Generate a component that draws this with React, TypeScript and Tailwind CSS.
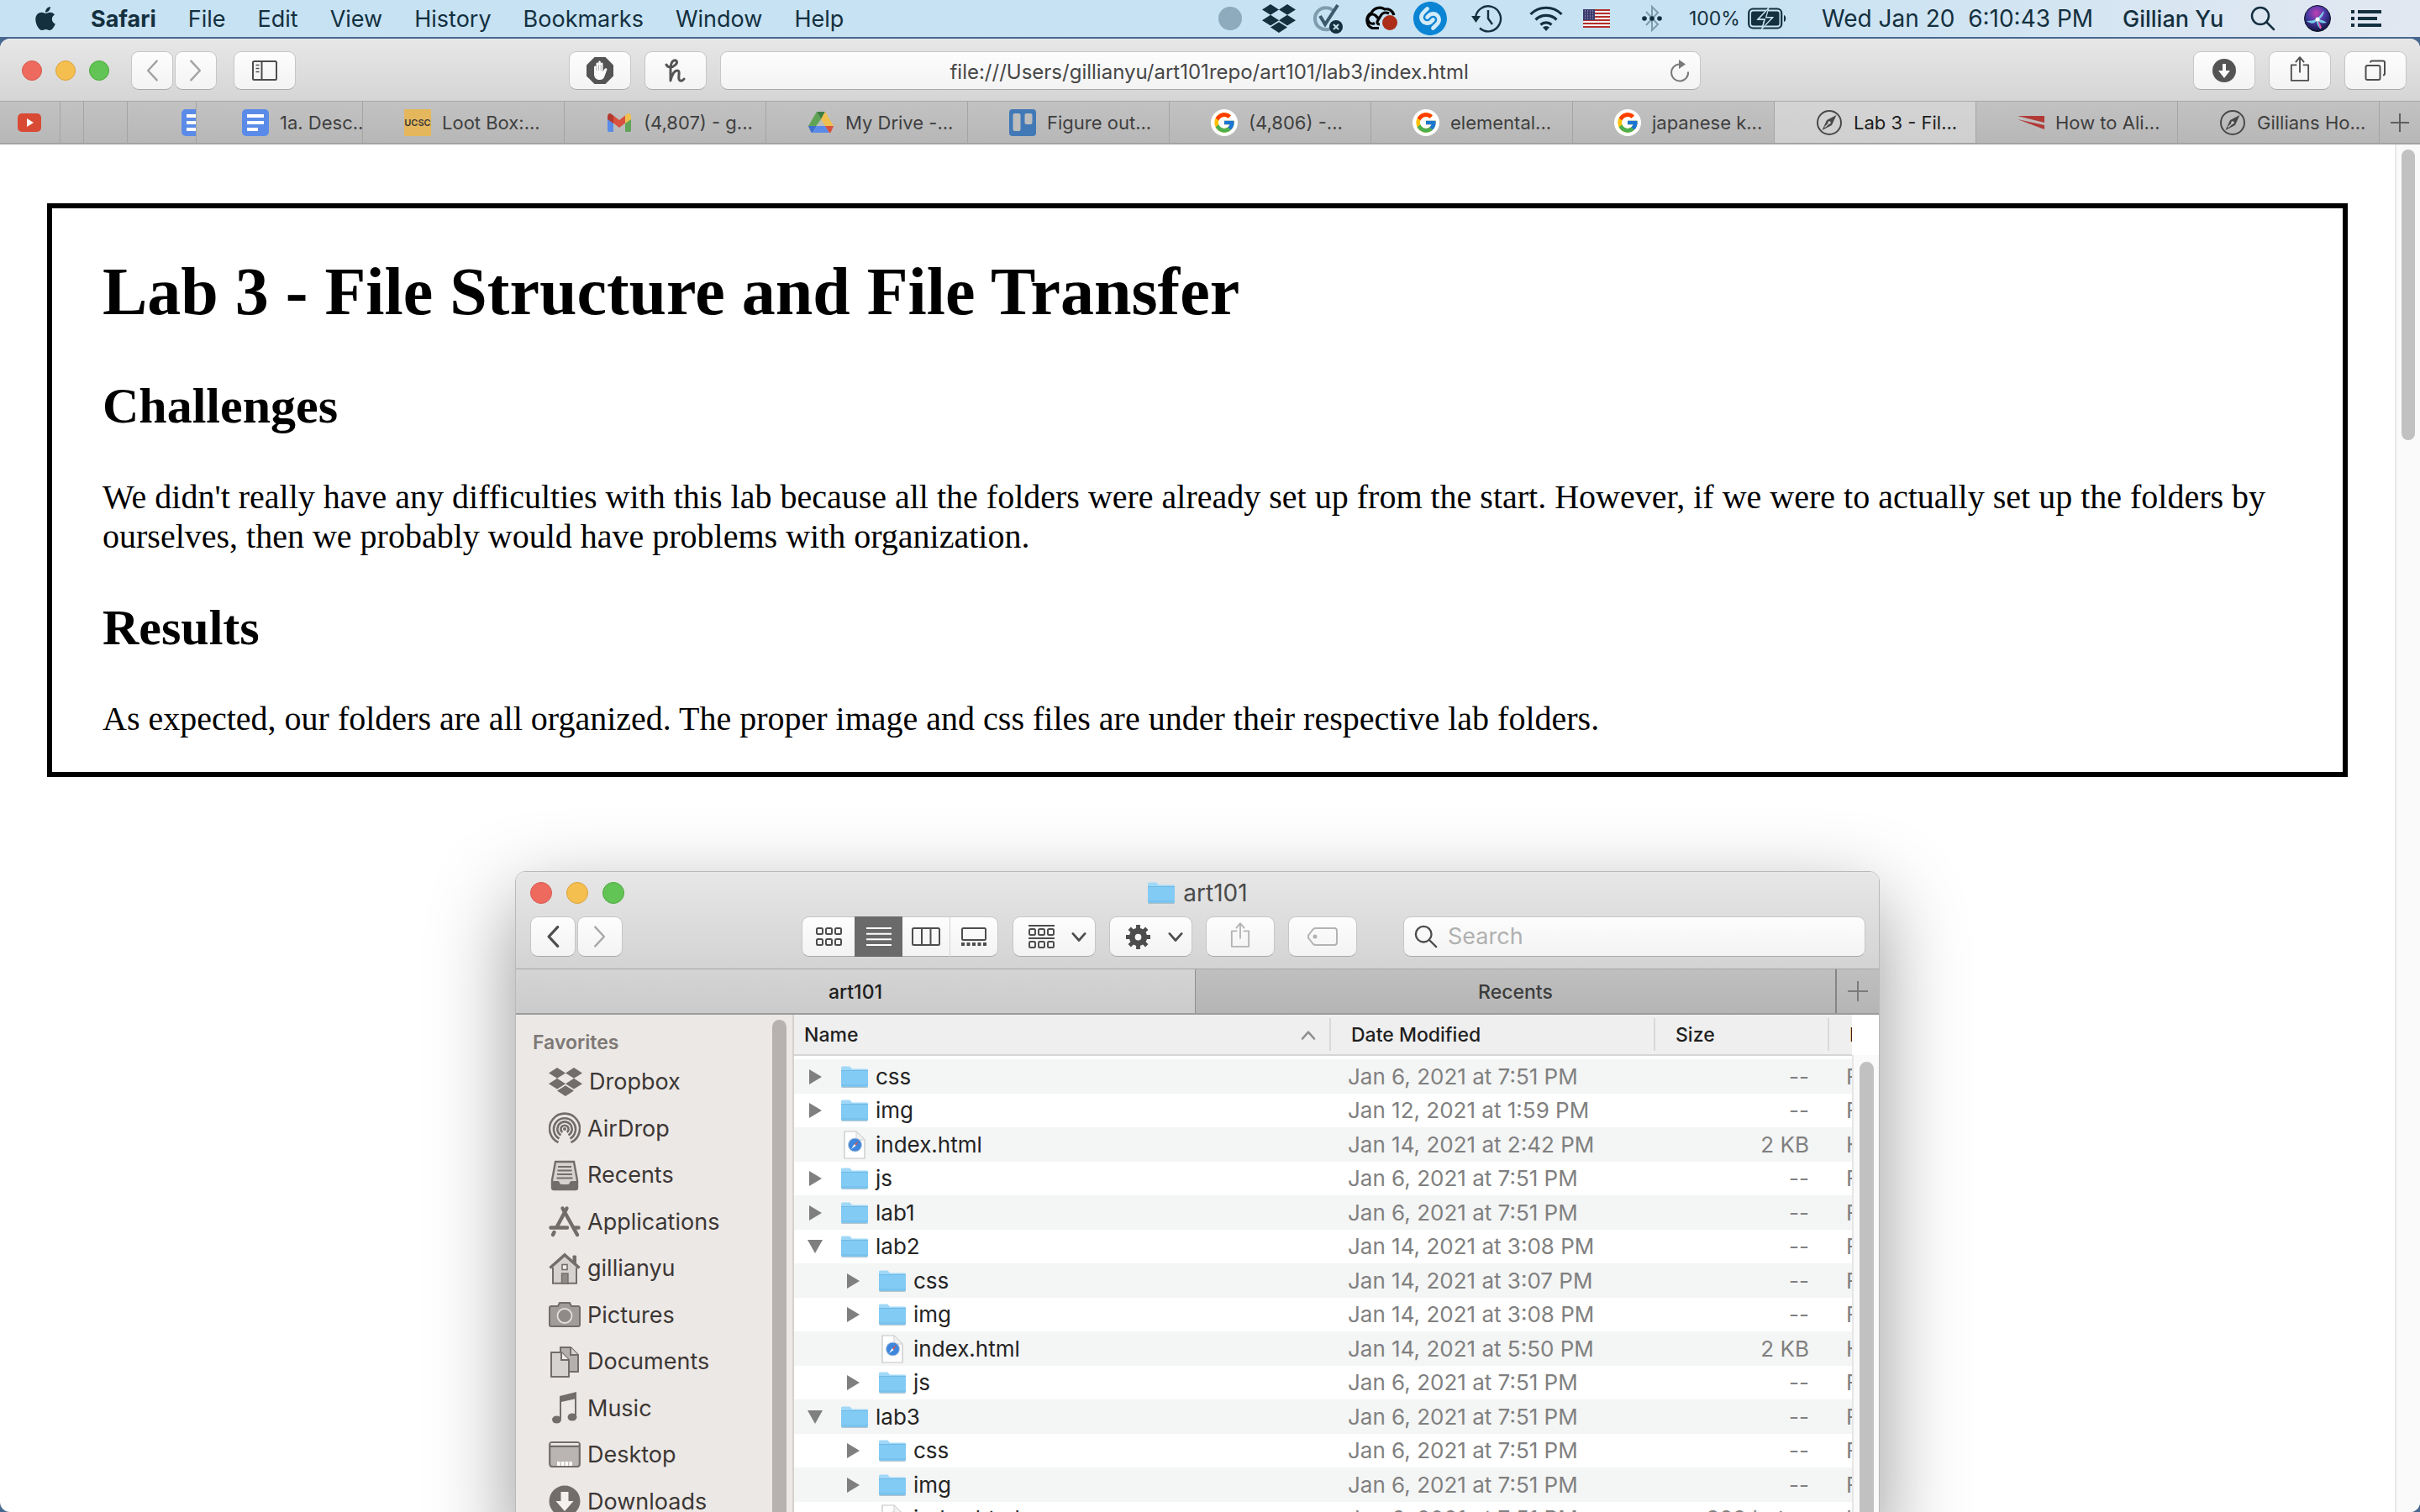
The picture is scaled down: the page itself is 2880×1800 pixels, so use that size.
import React from "react";
import { FaApple, FaDropbox } from "react-icons/fa";
import { FcGoogle } from "react-icons/fc";
import { SiShazam } from "react-icons/si";

type P = { className?: string };

/* ---------- shared pieces ---------- */

const btn =
  "flex shrink-0 items-center justify-center rounded-[9px] border border-[#c6c6c6] border-b-[#a9a9a9] bg-linear-to-b from-[#fdfdfd] to-[#f3f3f3] text-[#4d4d4d]";

function Chevron({ dir, className = "", w = 3 }: { dir: "left" | "right" | "down" | "up"; className?: string; w?: number }) {
  const d = { left: "M16 2 3 16l13 14", right: "M2 2l13 14L2 30", down: "M2 4l8 9 8-9", up: "M2 12l8-9 8 9" }[dir];
  const tall = dir === "left" || dir === "right";
  return (
    <svg viewBox={tall ? "0 0 18 32" : "0 0 20 16"} className={className} fill="none" stroke="currentColor" strokeWidth={w} strokeLinecap="round" strokeLinejoin="round">
      <path d={d} />
    </svg>
  );
}

function ShareIcon({ className = "", w = 2 }: { className?: string; w?: number }) {
  return (
    <svg viewBox="0 0 26 34" className={className} fill="none" stroke="currentColor" strokeWidth={w}>
      <path d="M9 12H2v20h22V12h-7M13 22V2M7.500 8.500 13 2l5.500 6.500" strokeLinejoin="round" />
    </svg>
  );
}

function SearchIcon({ className = "" }: P) {
  return (
    <svg viewBox="0 0 30 30" className={className} fill="none" stroke="currentColor" strokeWidth="2.500" strokeLinecap="round">
      <circle cx="12" cy="12" r="10" />
      <path d="m19 19 9 9" />
    </svg>
  );
}

/* ---------- menu bar icons ---------- */

const CheckBadge = () => (
  <svg viewBox="0 0 36 36" className="h-9 w-9">
    <path d="M26 10a13 13 0 1 0 2 13" fill="none" stroke="#7f9cae" strokeWidth="4" />
    <path d="m9 15 6 10L30 2" fill="none" stroke="#3c5a6c" strokeWidth="4" />
    <circle cx="28" cy="28" r="8" fill="#14303f" />
    <path d="m25 25 6 6m0-6-6 6" stroke="#c8e0ee" strokeWidth="2" />
  </svg>
);

const CloudBadge = () => (
  <svg viewBox="0 0 42 30" className="h-[30px] w-[42px]" fill="none" stroke="#050505" strokeWidth="3.200">
    <path d="M19 26.500h-8a10 10 0 0 1-1-18A11 11 0 0 1 26 4c4-1 9 1 11 7" />
    <path d="M20 22c-3 0-4-2-2-5l3-5c2-4 6-5 10-3M14 20.500a5.500 5.500 0 1 1 1-9l3 3" />
    <circle cx="32" cy="20" r="9" fill="#ac2d18" stroke="none" />
  </svg>
);

const Shazam = () => (
  <span className="flex size-10 items-center justify-center rounded-full bg-[#d3ebf8]">
    <SiShazam className="size-10" color="#0b84d3" />
  </span>
);

const TimeMachine = () => (
  <svg viewBox="0 0 38 34" className="h-[34px] w-[38px]" fill="none" stroke="currentColor" strokeWidth="2.400">
    <path d="M6 17A15 15 0 1 1 11 28.500" />
    <path d="M1 14h11l-5.500 8z" fill="currentColor" stroke="none" />
    <path d="M21 7v10l5 7" />
  </svg>
);

const Wifi = () => (
  <svg viewBox="0 0 40 30" className="h-[30px] w-10" fill="none" stroke="currentColor" strokeWidth="3.200">
    <path d="M1.500 10a26 26 0 0 1 37 0M7.500 16.500a18 18 0 0 1 25 0M13.500 22.500a9.500 9.500 0 0 1 13 0" />
    <path d="m20 30-4-4.500a6 6 0 0 1 8 0z" fill="currentColor" stroke="none" />
  </svg>
);

const Flag = () => (
  <svg viewBox="0 0 32 22" className="h-[22px] w-8">
    <rect width="32" height="22" fill="#f3f3f3" />
    {[0, 4, 8, 12, 16, 20].map((y) => (
      <rect key={y} y={y} width="32" height="2" fill="#b22f2c" />
    ))}
    <rect width="14" height="13" fill="#3c3b6e" />
    {[2, 5, 8, 11].map((y) => (
      <path key={y} d={`M2 ${y}h11`} stroke="#b9b9d2" strokeWidth="1" strokeDasharray="1 2" />
    ))}
  </svg>
);

const Bluetooth = () => (
  <svg viewBox="0 0 24 32" className="h-8 w-6" fill="none">
    <path d="M5 8l14 15-7 7V2l7 7L5 24" stroke="#7f9cae" strokeWidth="2" />
    <g fill="#14303f">
      <circle cx="3" cy="16" r="2.800" />
      <circle cx="12" cy="16" r="2.800" />
      <circle cx="21" cy="16" r="2.800" />
    </g>
  </svg>
);

const Battery = () => (
  <svg viewBox="0 0 46 26" className="h-[26px] w-[46px]">
    <rect x="1.200" y="1.500" width="39" height="23" rx="5" fill="none" stroke="currentColor" strokeWidth="2.200" />
    <path d="M43 9c3 1 3 7 0 8z" fill="currentColor" />
    <rect x="4" y="4.500" width="33.500" height="17" rx="2.500" fill="currentColor" />
    <path d="M25 0 11 14.500h8.500L16.500 26 30.500 11.500H22z" fill="#c8e2f1" stroke="#c8e2f1" strokeWidth="1" />
    <path d="M23.500 3 14 13.200h7.200L18.500 22.500l9.500-10h-7.200z" fill="currentColor" />
  </svg>
);

const Siri = () => (
  <svg viewBox="0 0 32 32" className="size-8">
    <defs>
      <radialGradient id="siri" cx=".45" cy=".3" r=".75">
        <stop offset="0" stopColor="#c13fb2" />
        <stop offset=".45" stopColor="#4a3aa8" />
        <stop offset="1" stopColor="#0a1030" />
      </radialGradient>
    </defs>
    <circle cx="16" cy="16" r="15.500" fill="url(#siri)" stroke="#0c1426" />
    <path d="M3 19c6 0 10-1 13-3 3-3 5-7 8-9-1 5-3 8-6 10 4 1 7 2 9 4-5 1-8 0-10-2 0 4 2 7 3 10-3-3-5-6-5-10-3 3-6 4-12 0z" fill="#7fe6ee" opacity=".85" />
    <path d="m16 16 3 12 2-1z" fill="#ff5aa8" />
    <circle cx="16" cy="17" r="2.500" fill="#fff" />
  </svg>
);

const MenuList = () => (
  <svg viewBox="0 0 36 20" className="h-5 w-9" fill="currentColor">
    <path d="M0 0h4v4H0zM8 0h28v4H8zM0 8h4v4H0zM8 8h23v4H8zM0 16h4v4H0zM8 16h28v4H8z" />
  </svg>
);

function MenuBar() {
  return (
    <header className="flex h-[44px] shrink-0 items-center bg-linear-to-r from-[#c6e2f3] from-70% to-[#e2e8f1] pr-[46px] pl-[38px] text-[27px] leading-none text-[#14303f]">
      <nav className="flex items-center gap-[38px]">
        <button aria-label="Apple menu">
          <FaApple className="size-8" />
        </button>
        <button className="font-bold">Safari</button>
        {["File", "Edit", "View", "History", "Bookmarks", "Window", "Help"].map((m) => (
          <button key={m}>{m}</button>
        ))}
      </nav>
      <div className="ml-auto flex items-center">
        <span className="mr-6 size-7 rounded-full bg-[#8eaabd]" />
        <FaDropbox className="mr-5 size-10" />
        <span className="mr-6"><CheckBadge /></span>
        <span className="mr-[18px]"><CloudBadge /></span>
        <span className="mr-7"><Shazam /></span>
        <span className="mr-8"><TimeMachine /></span>
        <span className="mr-6"><Wifi /></span>
        <span className="mr-[38px]"><Flag /></span>
        <span className="mr-8"><Bluetooth /></span>
        <span className="w-[70px] text-[23px]">100%</span>
        <span className="mr-[42px]"><Battery /></span>
        <span className="w-[358px] text-[28px] whitespace-pre">Wed Jan 20  6:10:43 PM</span>
        <span className="w-[152px] font-medium">Gillian Yu</span>
        <button aria-label="Spotlight" className="mr-[34px]"><SearchIcon className="size-[30px]" /></button>
        <button aria-label="Siri" className="mr-6"><Siri /></button>
        <button aria-label="Notification Center"><MenuList /></button>
      </div>
    </header>
  );
}

/* ---------- browser toolbar ---------- */

const SidebarIcon = () => (
  <svg viewBox="0 0 30 24" className="h-6 w-[30px]" fill="none" stroke="currentColor" strokeWidth="2">
    <rect x="1" y="1" width="28" height="22" rx="1.500" />
    <path d="M11.500 1v22" />
    <path d="M4.500 5.500h4M4.500 9.500h4M4.500 13.500h4" strokeWidth="1.600" />
  </svg>
);

const StopHand = () => (
  <svg viewBox="0 0 32 32" className="size-8">
    <path d="M9.500 0h13L32 9.500v13L22.500 32h-13L0 22.500v-13z" fill="#545454" />
    <path d="M9 12c0-2 2.500-2 2.500 0v-4c0-2 2.700-2 2.700 0V6c0-2 2.700-2 2.700 0v2c0-2 2.600-2 2.600 0v9l2-3c1-1.500 3.500-1 2.800 1L21 24c-1 2-2.500 3-5 3-4 0-6.500-2-7-6z" fill="#fafafa" />
    <path d="M11.700 12v4M14.500 9v7M17.200 9v7" stroke="#8a8a8a" strokeWidth=".6" />
  </svg>
);

const Honey = () => (
  <svg viewBox="0 0 26 28" className="h-7 w-[26px]" fill="none" stroke="#555" strokeWidth="3" strokeLinecap="round" strokeLinejoin="round">
    <path d="M2 7c2 4 7 4 11 0 3-3 1-6-2-5-3 1-4 6-4 11v13c2-8 5-12 8-12 4 0 1 7 2 10 1 3 4 3 6 0" />
  </svg>
);

function Toolbar() {
  return (
    <div className="flex h-[75px] shrink-0 items-center border-b border-[#a9a9a9] bg-linear-to-b from-[#e7e7e7] to-[#d5d5d5] pt-0.5 pr-4 pl-[26px]">
      <div className="flex gap-4">
        <button aria-label="Close" className="size-6 rounded-full border border-[#d8574d] bg-[#ee6a5f]" />
        <button aria-label="Minimize" className="size-6 rounded-full border border-[#dba23c] bg-[#f5bf4f]" />
        <button aria-label="Zoom" className="size-6 rounded-full border border-[#4ca93c] bg-[#61c454]" />
      </div>
      <div className="ml-[26px] flex gap-0.5 *:h-[46px] *:w-[50px]">
        <button aria-label="Back" className={btn}><Chevron dir="left" w={3} className="h-[26px] w-4 text-[#a3a3a3]" /></button>
        <button aria-label="Forward" className={btn}><Chevron dir="right" w={3} className="h-[26px] w-4 text-[#a3a3a3]" /></button>
      </div>
      <button aria-label="Show sidebar" className={`${btn} ml-5 h-[46px] w-[74px]`}><SidebarIcon /></button>
      <div className="grow-[325] basis-0" />
      <button aria-label="Content blocker" className={`${btn} mr-4 h-[46px] w-[74px]`}><StopHand /></button>
      <button aria-label="Honey" className={`${btn} mr-4 h-[46px] w-[74px]`}><Honey /></button>
      <div className={`${btn} h-[46px] min-w-0 grow-[1166] basis-0`}>
        <input aria-label="Address" defaultValue="file:///Users/gillianyu/art101repo/art101/lab3/index.html" className="h-full min-w-0 flex-1 bg-transparent pt-0.5 pl-[46px] text-center text-[24px] text-[#474747] outline-none" />
        <button aria-label="Reload" className="flex w-[48px] justify-center text-[#7a7a7a]">
          <svg viewBox="0 0 24 28" className="h-7 w-6" fill="none" stroke="currentColor" strokeWidth="2">
            <path d="M11 6.500a10 10 0 1 0 11 9" />
            <path d="m11 1 8 5.500-8 5.500z" fill="currentColor" stroke="none" />
          </svg>
        </button>
      </div>
      <div className="grow-[587] basis-0" />
      <div className="flex gap-4 *:h-[46px] *:w-[74px]">
        <button aria-label="Downloads" className={btn}>
          <svg viewBox="0 0 28 28" className="size-7">
            <circle cx="14" cy="14" r="14" fill="#545454" />
            <path d="M12 6h4v8h5l-7 9-7-9h5z" fill="#fafafa" />
          </svg>
        </button>
        <button aria-label="Share" className={btn}><ShareIcon className="mb-1 h-8 w-6" /></button>
        <button aria-label="Show all tabs" className={btn}>
          <svg viewBox="0 0 26 26" className="size-[26px]" fill="none" stroke="currentColor" strokeWidth="2">
            <rect x="1.500" y="7" width="17" height="17" rx="2" />
            <path d="M7 3.500a2 2 0 0 1 2-2h13a2 2 0 0 1 2 2v13a2 2 0 0 1-2 2" />
          </svg>
        </button>
      </div>
    </div>
  );
}

/* ---------- browser tabs ---------- */

const DocsIcon = () => (
  <svg viewBox="0 0 32 32" className="size-8 shrink-0">
    <rect width="32" height="32" rx="5" fill="#5b8be8" />
    <path d="M6 8h20M6 16h20M6 24h13" stroke="#fff" strokeWidth="4" />
  </svg>
);
const YouTube = () => (
  <svg viewBox="0 0 28 22" className="h-[22px] w-7">
    <rect width="28" height="22" rx="5" fill="#d94a35" />
    <path d="m11 6 8 5-8 5z" fill="#fff" />
  </svg>
);
const Gmail = () => (
  <svg viewBox="0 0 32 32" className="size-8 shrink-0">
    <path d="M2 9v16c0 1 .5 2 2 2h5V14z" fill="#5b8be8" />
    <path d="M30 9v16c0 1-.5 2-2 2h-5V14z" fill="#62a35a" />
    <path d="M9 7.500 16 13l7-5.500v9L16 22l-7-5.500z" fill="#d8523f" />
    <path d="M2 9c0-4 3-5 5-3l2 1.500v9.500l-7-5z" fill="#b23a30" />
    <path d="M30 9c0-4-3-5-5-3l-2 1.500v9.500l7-5z" fill="#efc04f" />
  </svg>
);
const Drive = () => (
  <svg viewBox="0 0 32 32" className="size-8 shrink-0">
    <path d="M11 3h10l-5 9z" fill="#3f7d42" />
    <path d="M11 3 1 20l4 7L16 12z" fill="#5fa355" />
    <path d="M21 3l10 17H21l-5-8z" fill="#efc04f" />
    <path d="M1 20h10l-5 8c-1 0-1.500-.5-2-1z" fill="#3f6fd0" />
    <path d="M11 20h10l5 8H6z" fill="#5b8be8" />
    <path d="M21 20h10l-3 7c-.5.700-1 1-2 1z" fill="#d8523f" />
  </svg>
);
const Trello = () => (
  <svg viewBox="0 0 32 32" className="size-8 shrink-0">
    <rect width="32" height="32" rx="4" fill="#4179b6" />
    <rect x="4.500" y="5" width="9" height="21" rx="2" fill="#bdbdbd" />
    <rect x="18.500" y="5" width="9" height="13" rx="2" fill="#bdbdbd" />
  </svg>
);
const Google = () => (
  <span className="flex size-8 shrink-0 items-center justify-center rounded-full bg-white">
    <FcGoogle className="size-7" />
  </span>
);
const Compass = () => (
  <svg viewBox="0 0 32 32" className="size-8 shrink-0 text-[#484848]" fill="none" stroke="currentColor">
    <circle cx="16" cy="16" r="14" strokeWidth="2" />
    <path d="m24.500 7-5.500 12L7.500 25 13 13z" fill="currentColor" stroke="none" />
    <path d="m10.500 21.500 5-4.500" stroke="#c8c8c8" strokeWidth="1.500" />
    <circle cx="16" cy="16" r="1.800" fill="#c8c8c8" stroke="none" />
  </svg>
);
const RedStripes = () => (
  <svg viewBox="0 0 32 16" className="h-4 w-8 shrink-0" fill="#b23a36">
    <path d="M0 0h32v8zM0 4l32 7v5z" />
  </svg>
);
const Ucsc = () => (
  <span className="flex size-8 shrink-0 items-center justify-center bg-[#e4b75c] text-[11px] font-semibold text-[#3c3a3a]">UCSC</span>
);

const pageTabs = [
  { title: "Loot Box:...", icon: <Ucsc /> },
  { title: "(4,807) - g...", icon: <Gmail /> },
  { title: "My Drive -...", icon: <Drive /> },
  { title: "Figure out...", icon: <Trello /> },
  { title: "(4,806) -...", icon: <Google /> },
  { title: "elemental...", icon: <Google /> },
  { title: "japanese k...", icon: <Google /> },
  { title: "Lab 3 - Fil...", icon: <Compass />, active: true },
  { title: "How to Ali...", icon: <RedStripes /> },
  { title: "Gillians Ho...", icon: <Compass /> },
];

function TabBar() {
  const edge = "shrink-0 border-r border-[#a4a4a4]";
  return (
    <div className="flex h-[51px] shrink-0 border-b-2 border-[#a3a3a3] bg-linear-to-b from-[#c2c2c2] to-[#b7b7b7] text-[22px] text-[#3f3f3f]">
      <button aria-label="YouTube" className={`${edge} flex w-[72px] items-center pl-[21px]`}><YouTube /></button>
      <div className={`${edge} w-7`} />
      <div className={`${edge} w-[52px]`} />
      <button aria-label="Document" className={`${edge} flex w-[82px] items-center overflow-hidden pl-16`}><DocsIcon /></button>
      <button className={`${edge} flex w-[198px] items-center gap-[13px] overflow-hidden pt-px pl-[54px] whitespace-nowrap`}>
        <DocsIcon />
        1a. Desc...
      </button>
      {pageTabs.map((t) => (
        <button
          key={t.title}
          className={`flex min-w-0 flex-1 items-center gap-[13px] overflow-hidden border-r border-[#a4a4a4] pt-px pl-[49px] whitespace-nowrap ${t.active ? "bg-linear-to-b from-[#d4d4d4] to-[#cfcfcf] text-[#1c1c1c]" : ""}`}
        >
          {t.icon}
          {t.title}
        </button>
      ))}
      <button aria-label="New tab" className="flex w-12 shrink-0 items-center justify-center">
        <svg viewBox="0 0 22 22" className="size-[22px]" stroke="#5f5f5f" strokeWidth="2"><path d="M11 0v22M0 11h22" /></svg>
      </button>
    </div>
  );
}

/* ---------- finder window ---------- */

const Folder = () => (
  <svg viewBox="0 0 32 26" className="h-[26px] w-8 shrink-0">
    <path d="M0 2Q0 .5 1.500.5h8q1 0 1.800 1L13 3.500h17.500Q32 3.500 32 5v17H0z" fill="#a0d8f8" />
    <path d="M0 6h32v17.500q0 1.500-1.500 1.500h-29Q0 25 0 23.500z" fill="#82cbf5" />
    <path d="M0 5.500h32M0 23h32" stroke="#6fb9e6" strokeWidth="1" />
    <path d="M.5 25.300h31" stroke="#8aa9bb" strokeWidth=".8" />
  </svg>
);

const HtmlFile = () => (
  <svg viewBox="0 0 32 34" className="h-[34px] w-8 shrink-0">
    <path d="M4 1h14l10 10v22H4z" fill="#fff" stroke="#c4c4c4" strokeWidth="1.200" />
    <path d="M18 1v7q0 3 3 3h7z" fill="#f1f1f1" stroke="#cfcfcf" strokeWidth="1" />
    <circle cx="16.500" cy="17" r="8" fill="#3f86dd" stroke="#b9c8da" />
    <path d="m21 12-3.500 6-1.500-1.800z" fill="#e2503f" />
    <path d="m12 22 3.800-6 1.700 2z" fill="#fff" />
  </svg>
);

function Disclosure({ open }: { open: boolean }) {
  return (
    <button aria-label={open ? "Collapse" : "Expand"} className="w-[18px] shrink-0">
      <svg viewBox="0 0 18 18" className="size-[18px]" fill="#7f7f7f">
        <path d={open ? "M0 1h18L9 17z" : "M2 0v18l15-9z"} />
      </svg>
    </button>
  );
}

const G = "#726d6a";
const L = "#d6d2cf";

const sideIcons: Record<string, React.ReactNode> = {
  AirDrop: (
    <g fill="none" stroke={G} strokeWidth="2.600">
      <path d="M11.500 36A18 18 0 1 1 26.500 36M12.500 31.500a13 13 0 1 1 13 0M14.500 27.500a8.700 8.700 0 1 1 9 0M16.300 24a4.600 4.600 0 1 1 5.400 0" />
      <circle cx="19" cy="20" r="2" fill={G} stroke="none" />
    </g>
  ),
  Recents: (
    <g>
      <path d="M8 3h22l4 22v9q0 2-2 2H6q-2 0-2-2v-9z" fill={L} stroke={G} strokeWidth="2.400" />
      <path d="M11 9h16M10.500 13.500h17M10 18h18M9.500 22.500h19" stroke={G} strokeWidth="1.800" />
      <path d="M4 26h7q1.500 0 2 2t2 2h8q1.500 0 2-2t2-2h7v8q0 2-2 2H6q-2 0-2-2z" fill={G} />
    </g>
  ),
  Applications: (
    <g stroke={G} strokeWidth="4.400" strokeLinecap="round" fill="none">
      <path d="M16.500 3.500 19 8l15 27M21.500 3.500 9.500 26M6.500 32 5 35M2.500 26.500h19.500M31 26.500h4.500" />
    </g>
  ),
  gillianyu: (
    <g>
      <path d="M29 4h3.500v10L29 11z" fill={G} stroke={G} />
      <path d="M5 18 19 5l14 13v19H5z" fill={L} />
      <path d="M5 18v18.800h28V18" fill="none" stroke={G} strokeWidth="2" />
      <path d="M1.500 18.500 19 3l17.500 15.500" fill="none" stroke={G} strokeWidth="3.600" />
      <rect x="16" y="14.500" width="6" height="6" fill="#f1eeec" stroke={G} strokeWidth="1.600" />
      <rect x="15.500" y="25" width="7.500" height="12" fill="#8f8a87" stroke={G} strokeWidth="1.400" />
    </g>
  ),
  Pictures: (
    <g>
      <path d="M3 9h8l2-4h12l2 4h8q2 0 2 2v20q0 2-2 2H3q-2 0-2-2V11q0-2 2-2z" fill="#a19c99" stroke={G} strokeWidth="2" />
      <circle cx="19" cy="20.500" r="8.500" fill="#8f8a87" stroke="#e3dfdc" strokeWidth="1.800" />
    </g>
  ),
  Documents: (
    <g stroke={G} strokeWidth="2">
      <path d="M14 2h12l9 9v20H14z" fill="#b5b0ad" />
      <path d="M26 2v9h9" fill={L} />
      <path d="M3 8h12l9 9v20H3z" fill={L} />
      <path d="M15 8v9h9" fill="#eeebe9" />
    </g>
  ),
  Music: (
    <g fill={G}>
      <path d="M13 5 33 0v8l-18 4v20h-2z" />
      <path d="M31 6h2v23h-2z" />
      <ellipse cx="9.500" cy="33" rx="5.500" ry="4.600" />
      <ellipse cx="28" cy="30" rx="5.500" ry="4.600" />
    </g>
  ),
  Desktop: (
    <g>
      <rect x="1.200" y="4" width="35.600" height="29" rx="3" fill="#bab5b2" stroke={G} strokeWidth="2.200" />
      <path d="M2.500 6.200h33" stroke="#eeebe9" strokeWidth="2.200" />
      <path d="M2 9h34" stroke={G} strokeWidth="2" />
      <path d="M10 29.500h18" stroke="#fff" strokeWidth="5" strokeDasharray="3.600 1.200" />
    </g>
  ),
  Downloads: (
    <g>
      <circle cx="19" cy="19" r="18.500" fill={G} />
      <path d="M14.500 8h9v11h6L19 31 8.500 19h6z" fill="#f4f1ef" />
    </g>
  ),
};

const sidebarItems = ["Dropbox", "AirDrop", "Recents", "Applications", "gillianyu", "Pictures", "Documents", "Music", "Desktop", "Downloads"];

type Row = { name: string; date: string; size: string; kind: string; depth: number; open?: boolean };
const rows: Row[] = [
  { name: "css", date: "Jan 6, 2021 at 7:51 PM", size: "--", kind: "Folder", depth: 0 },
  { name: "img", date: "Jan 12, 2021 at 1:59 PM", size: "--", kind: "Folder", depth: 0 },
  { name: "index.html", date: "Jan 14, 2021 at 2:42 PM", size: "2 KB", kind: "HTML", depth: 0 },
  { name: "js", date: "Jan 6, 2021 at 7:51 PM", size: "--", kind: "Folder", depth: 0 },
  { name: "lab1", date: "Jan 6, 2021 at 7:51 PM", size: "--", kind: "Folder", depth: 0 },
  { name: "lab2", date: "Jan 14, 2021 at 3:08 PM", size: "--", kind: "Folder", depth: 0, open: true },
  { name: "css", date: "Jan 14, 2021 at 3:07 PM", size: "--", kind: "Folder", depth: 1 },
  { name: "img", date: "Jan 14, 2021 at 3:08 PM", size: "--", kind: "Folder", depth: 1 },
  { name: "index.html", date: "Jan 14, 2021 at 5:50 PM", size: "2 KB", kind: "HTML", depth: 1 },
  { name: "js", date: "Jan 6, 2021 at 7:51 PM", size: "--", kind: "Folder", depth: 1 },
  { name: "lab3", date: "Jan 6, 2021 at 7:51 PM", size: "--", kind: "Folder", depth: 0, open: true },
  { name: "css", date: "Jan 6, 2021 at 7:51 PM", size: "--", kind: "Folder", depth: 1 },
  { name: "img", date: "Jan 6, 2021 at 7:51 PM", size: "--", kind: "Folder", depth: 1 },
  { name: "index.html", date: "Jan 6, 2021 at 7:51 PM", size: "322 bytes", kind: "HTML", depth: 1 },
];

const sixBoxes = (y: number) => (
  <>
    {[1, 12, 23].map((x) => (
      <rect key={x} x={x} y={y} width="7" height="7" rx="1.500" />
    ))}
  </>
);

function FinderToolbar() {
  return (
    <div className="flex h-[62px] items-start *:h-12">
      <div className="flex gap-0.5 *:w-[54px]">
        <button aria-label="Back" className={btn}><Chevron dir="left" w={4} className="h-[26px] w-4" /></button>
        <button aria-label="Forward" className={btn}><Chevron dir="right" w={3} className="h-[26px] w-4 text-[#a8a8a8]" /></button>
      </div>
      <div className="min-w-4 grow-[213] basis-0" />
      <div className={`${btn} mr-[17px] *:flex *:h-12 *:items-center *:justify-center`}>
        <button aria-label="Icon view" className="w-[62px]">
          <svg viewBox="0 0 31 22" className="h-[22px] w-[31px]" fill="none" stroke="currentColor" strokeWidth="2">{sixBoxes(1)}{sixBoxes(14)}</svg>
        </button>
        <button aria-label="List view" className="w-[57px] bg-[#6a6a6a]">
          <svg viewBox="0 0 30 22" className="h-[22px] w-[30px]" stroke="#fff" strokeWidth="2"><path d="M0 1h30M0 7.700h30M0 14.300h30M0 21h30" /></svg>
        </button>
        <button aria-label="Column view" className="w-[57px] border-r border-[#d3d3d3]">
          <svg viewBox="0 0 34 22" className="h-[22px] w-[34px]" fill="none" stroke="currentColor" strokeWidth="2"><rect x="1" y="1" width="32" height="20" rx="1.500" /><path d="M12 1v20M22.500 1v20" /></svg>
        </button>
        <button aria-label="Gallery view" className="w-14">
          <svg viewBox="0 0 30 22" className="h-[22px] w-[30px]" fill="none" stroke="currentColor" strokeWidth="2"><rect x="1" y="1" width="28" height="14" rx="1.500" /><path d="M0 20h30" strokeWidth="4" strokeDasharray="4 2.500" /></svg>
        </button>
      </div>
      <button aria-label="Group items" className={`${btn} mr-4 w-[99px] gap-5 pl-2`}>
        <svg viewBox="0 0 31 28" className="h-7 w-[31px]" fill="none" stroke="currentColor" strokeWidth="2"><path d="M0 1h31M0 16h31" />{sixBoxes(5)}{sixBoxes(20)}</svg>
        <Chevron dir="down" w={3} className="h-4 w-[18px]" />
      </button>
      <button aria-label="Action" className={`${btn} mr-4 w-[99px] gap-5 pl-2`}>
        <svg viewBox="0 0 32 32" className="size-[31px]" fill="none" stroke="currentColor">
          <circle cx="16" cy="16" r="7.500" strokeWidth="7" />
          <path d="M16 1v5M16 26v5M1 16h5M26 16h5M5.400 5.400l3.500 3.500M23.100 23.100l3.500 3.500M26.600 5.400l-3.500 3.500M8.900 23.100l-3.500 3.500" strokeWidth="5" />
        </svg>
        <Chevron dir="down" w={3} className="h-4 w-[18px]" />
      </button>
      <button aria-label="Share" className={`${btn} mr-4 w-[82px]`}><ShareIcon className="mb-1 h-8 w-6 text-[#b3b3b3]" /></button>
      <button aria-label="Edit tags" className={`${btn} w-[82px]`}>
        <svg viewBox="0 0 36 22" className="h-[22px] w-9" fill="none" stroke="#b3b3b3" strokeWidth="2"><path d="M10 1h22q3 0 3 3v14q0 3-3 3H10q-2 0-3-1L1 12.500v-3L7 2q1-1 3-1z" /><circle cx="9" cy="11" r="1.500" fill="#b3b3b3" /></svg>
      </button>
      <div className="min-w-4 grow-[55] basis-0" />
      <label className={`${btn} min-w-0 grow-[524] basis-0 gap-3 px-3`}>
        <SearchIcon className="size-7 shrink-0" />
        <input type="search" aria-label="Search" placeholder="Search" className="min-w-0 flex-1 bg-transparent text-[27px] outline-none placeholder:text-[#b0b0b0]" />
      </label>
    </div>
  );
}

function HeadCell({ label, className = "", last = false, sorted = false }: { label: string; className?: string; last?: boolean; sorted?: boolean }) {
  return (
    <th scope="col" className="border-b-2 border-[#d6d6d6] bg-[#efefef] p-0 text-left font-medium">
      <div className={`flex h-[39px] items-center justify-between overflow-hidden pt-0.5 ${last ? "" : "border-r-2 border-[#d9d9d9]"} ${className}`}>
        {label}
        {sorted && <Chevron dir="up" w={3} className="h-3.5 w-[18px] text-[#8f8f8f]" />}
      </div>
    </th>
  );
}

function Finder() {
  return (
    <section aria-label="Finder" className="mx-auto mt-[112px] w-full max-w-[1624px] overflow-hidden rounded-t-xl border border-[#b9b9b9] shadow-[0_36px_100px_rgba(0,0,0,0.42)]">
      <div className="border-b border-[#a6a6a6] bg-linear-to-b from-[#e7e7e7] to-[#d3d3d3] pr-4 pl-[17px]">
        <div className="grid h-[53px] grid-cols-3 items-center pb-1">
          <div className="flex gap-[17px]">
            <button aria-label="Close" className="size-[26px] rounded-full border border-[#d8574d] bg-[#ee6a5f]" />
            <button aria-label="Minimize" className="size-[26px] rounded-full border border-[#dba23c] bg-[#f5bf4f]" />
            <button aria-label="Zoom" className="size-[26px] rounded-full border border-[#4ca93c] bg-[#61c454]" />
          </div>
          <div className="flex items-center justify-center gap-2.5 text-[28px] leading-none text-[#4a4a4a]">
            <Folder />
            art101
          </div>
        </div>
        <FinderToolbar />
      </div>

      <div className="flex h-[54px] border-b-2 border-[#9b9b9b] bg-linear-to-b from-[#bfbfbf] to-[#b5b5b5] text-[23px] font-medium">
        <button className="grow-[809] basis-0 border-r border-[#8f8f8f] bg-linear-to-b from-[#d4d4d4] to-[#cbcbcb] pt-0.5 text-[#1e1e1e]">art101</button>
        <button className="grow-[762] basis-0 border-r-2 border-[#858585] pt-0.5 text-[#3c3c3c]">Recents</button>
        <button aria-label="New tab" className="flex w-[50px] items-center justify-center">
          <svg viewBox="0 0 24 24" className="size-6" stroke="#7b7b7b" strokeWidth="2"><path d="M12 0v24M0 12h24" /></svg>
        </button>
      </div>

      <div className="flex">
        <aside className="flex w-[331px] shrink-0 border-r-2 border-[#d6d1ce] bg-[#ece8e5]">
          <nav className="flex-1 pt-3.5 pl-5">
            <h2 className="text-[23px] leading-[38px] font-semibold text-[#7d7875]">Favorites</h2>
            <ul>
              {sidebarItems.map((s) => (
                <li key={s} className="odd:h-[55px] even:h-14">
                  <a href="#" className="flex h-full items-center gap-2 pl-[19px] text-[27px] leading-none text-[#3c3735]">
                    {s === "Dropbox" ? (
                      <FaDropbox className="size-[40px]" color={G} />
                    ) : (
                      <svg viewBox="0 0 38 38" className="size-[38px]">{sideIcons[s]}</svg>
                    )}
                    {s}
                  </a>
                </li>
              ))}
            </ul>
          </nav>
          <div className="mt-1.5 mr-[7px] w-[17px] rounded-t-full bg-[#b7b2b0]" />
        </aside>

        <div className="min-w-0 flex-1 overflow-hidden bg-white">
          <table className="w-full table-fixed border-collapse">
            <colgroup>
              <col />
              <col className="w-[386px]" />
              <col className="w-[207px]" />
              <col className="w-[27px]" />
            </colgroup>
            <thead className="text-[23px] text-[#1f1f1f]">
              <tr className="h-12">
                <HeadCell label="Name" className="pr-4 pl-3" sorted />
                <HeadCell label="Date Modified" className="pl-6" />
                <HeadCell label="Size" className="pl-6" />
                <HeadCell label="Kind" className="pl-6" last />
              </tr>
            </thead>
            <tbody className="text-[26px] leading-none text-[#808080] before:block before:h-1">
              {rows.map((r, i) => (
                <tr key={i} className="odd:h-[41px] odd:bg-[#f4f5f5] even:h-10">
                  <td className="p-0">
                    <div className={`flex items-center ${r.depth ? "pl-[61px]" : "pl-4"} text-[#242424]`}>
                      {r.kind === "Folder" ? <Disclosure open={!!r.open} /> : <span className="w-[18px]" />}
                      <span className="-my-1 mr-[9px] ml-[22px]">{r.kind === "Folder" ? <Folder /> : <HtmlFile />}</span>
                      {r.name}
                    </div>
                  </td>
                  <td className="p-0 pl-5">{r.date}</td>
                  <td className="p-0 pr-6 text-right">{r.size}</td>
                  <td className="overflow-hidden p-0 pl-5 whitespace-nowrap">{r.kind}</td>
                </tr>
              ))}
            </tbody>
          </table>
        </div>

        <div className="flex w-8 shrink-0 flex-col bg-white pt-12">
          <div className="flex flex-1 justify-center border-l-2 border-[#e6e6e6] bg-[#fafafa] pt-2">
            <div className="w-[17px] rounded-t-full bg-[#c1c1c1]" />
          </div>
        </div>
      </div>
    </section>
  );
}

/* ---------- page ---------- */

export default function App() {
  return (
    <div className="flex h-screen flex-col overflow-hidden bg-[#0a1020] font-['Inter',sans-serif]">
      <MenuBar />
      <div className="flex min-h-0 flex-1 flex-col bg-[#47688f] pt-0.5">
        <div className="flex min-h-0 flex-1 flex-col overflow-hidden rounded-xl bg-white">
          <Toolbar />
          <TabBar />
          <div className="flex min-h-0 flex-1">
            <main className="min-w-0 flex-1 overflow-hidden px-14 pt-[70px]">
              <article className="border-6 border-black px-[60px] pt-[53px] pb-10 font-['Liberation_Serif',serif] text-[40px] leading-[47px] text-black">
                <h1 className="text-[80px] leading-[92px] font-bold">Lab 3 - File Structure and File Transfer</h1>
                <h2 className="mt-14 text-[60px] leading-[68px] font-bold">Challenges</h2>
                <p className="mt-[51px]">
                  We didn't really have any difficulties with this lab because all the folders were already set up from the start. However, if we were to actually set up the folders by ourselves, then we probably would have problems with organization.
                </p>
                <h2 className="mt-[51px] text-[60px] leading-[68px] font-bold">Results</h2>
                <p className="mt-[51px]">As expected, our folders are all organized. The proper image and css files are under their respective lab folders.</p>
              </article>
              <Finder />
            </main>
            <div className="flex w-[30px] shrink-0 justify-center border-l-2 border-[#e8e8e8] bg-[#fafafa] pt-1.5">
              <div className="h-[346px] w-4 rounded-full bg-[#c1c1c1]" />
            </div>
          </div>
        </div>
      </div>
    </div>
  );
}
